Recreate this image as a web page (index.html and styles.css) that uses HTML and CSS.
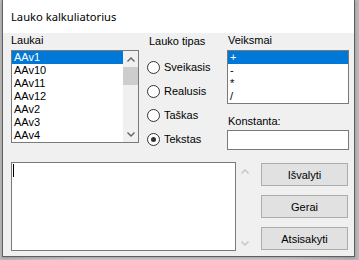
FILE: index.html
```html
<!DOCTYPE html>
<html lang="lt">
<head>
    <meta charset="UTF-8">
    <title>Lauko kalkuliatorius</title>
    <link rel="stylesheet" href="styles.css">
</head>
<body>
    <div class="window">
        <div class="titlebar">Lauko kalkuliatorius</div>
        <div class="client">
            <div class="top">
                <div class="col-fields">
                    <div class="label">Laukai</div>
                    <div class="listbox fields">
                        <div class="items">
                            <div class="item selected">AAv1</div>
                            <div class="item">AAv10</div>
                            <div class="item">AAv11</div>
                            <div class="item">AAv12</div>
                            <div class="item">AAv2</div>
                            <div class="item">AAv3</div>
                            <div class="item">AAv4</div>
                        </div>
                        <div class="vscroll">
                            <div class="arrow">
                                <svg width="8" height="5" viewBox="0 0 8 5"><polyline points="0.5,4.5 4,1 7.5,4.5" fill="none" stroke="#606060" stroke-width="1.3"/></svg>
                            </div>
                            <div class="track"><div class="thumb"></div></div>
                            <div class="arrow">
                                <svg width="8" height="5" viewBox="0 0 8 5"><polyline points="0.5,0.5 4,4 7.5,0.5" fill="none" stroke="#606060" stroke-width="1.3"/></svg>
                            </div>
                        </div>
                    </div>
                </div>
                <div class="col-type">
                    <div class="label group-label">Lauko tipas</div>
                    <div class="radio"><span class="dot"></span>Sveikasis</div>
                    <div class="radio"><span class="dot"></span>Realusis</div>
                    <div class="radio"><span class="dot"></span>Taškas</div>
                    <div class="radio"><span class="dot checked"></span>Tekstas</div>
                </div>
                <div class="col-ops">
                    <div class="label ops-label">Veiksmai</div>
                    <div class="listbox ops">
                        <div class="items">
                            <div class="item selected">+</div>
                            <div class="item">-</div>
                            <div class="item">*</div>
                            <div class="item">/</div>
                        </div>
                    </div>
                    <div class="label const-label">Konstanta:</div>
                    <div class="textbox"></div>
                </div>
            </div>
            <div class="bottom">
                <div class="memo"><span class="caret"></span></div>
                <div class="memo-scroll">
                    <svg width="8" height="5" viewBox="0 0 8 5"><polyline points="0.5,4.5 4,1 7.5,4.5" fill="none" stroke="#c4c4c4" stroke-width="1.4"/></svg>
                    <svg width="8" height="5" viewBox="0 0 8 5"><polyline points="0.5,0.5 4,4 7.5,0.5" fill="none" stroke="#c4c4c4" stroke-width="1.4"/></svg>
                </div>
                <div class="buttons">
                    <button>Išvalyti</button>
                    <button>Gerai</button>
                    <button>Atsisakyti</button>
                </div>
            </div>
        </div>
    </div>
</body>
</html>
```

FILE: styles.css
```css
html, body {
    margin: 0;
    height: 100%;
}
body {
    background: linear-gradient(to right, #bcbcbc, #d0d0d0 20%, #d0d0d0 80%, #b8b8b8);
    font-family: 'Liberation Sans', Arial, sans-serif;
    font-size: 11px;
    color: #000;
}
.window {
    width: 351px;
    height: 256px;
    margin-left: 2px;
    border: 1px solid #5f5f5f;
    border-top: none;
    background-color: #f0f0f0;
    box-shadow: 0 1px 3px rgba(0, 0, 0, 0.25);
    display: flex;
    flex-direction: column;
}
.titlebar {
    height: 33px;
    flex: none;
    box-sizing: border-box;
    padding: 9px 0 0 8px;
    background-color: #fff;
    font-family: 'Noto Sans', sans-serif;
    font-size: 11.2px;
    line-height: 16px;
}
.client {
    flex: 1;
    padding-left: 8px;
}
.top {
    display: flex;
    height: 129px;
}
.label {
    line-height: 13px;
    white-space: nowrap;
}
.col-fields {
    width: 128px;
}
.col-fields .label {
    height: 16px;
    padding-top: 1px;
}
.listbox {
    display: flex;
    background-color: #fff;
    border: 1px solid #7a7a7a;
    overflow: hidden;
}
.listbox.fields {
    height: 91px;
}
.items {
    flex: 1;
}
.item {
    height: 13px;
    line-height: 13px;
    padding-left: 2px;
    white-space: nowrap;
}
.item.selected {
    background-color: #0078d7;
    color: #fff;
}
.vscroll {
    width: 15px;
    display: flex;
    flex-direction: column;
    background-color: #f0f0f0;
}
.arrow {
    height: 16px;
    display: flex;
    align-items: center;
    justify-content: center;
}
.track {
    flex: 1;
}
.thumb {
    height: 18px;
    background-color: #cdcdcd;
}
.col-type {
    width: 80px;
    margin-left: 8px;
}
.group-label {
    height: 20px;
    padding: 2px 0 0 2px;
}
.radio {
    height: 24px;
    display: flex;
    align-items: center;
}
.dot {
    width: 11px;
    height: 11px;
    border: 1px solid #333;
    border-radius: 50%;
    background-color: #fff;
    margin-right: 4px;
    display: flex;
    align-items: center;
    justify-content: center;
}
.dot.checked::after {
    content: '';
    width: 5px;
    height: 5px;
    border-radius: 50%;
    background-color: #333;
}
.col-ops {
    width: 122px;
}
.ops-label {
    height: 16px;
    padding: 1px 0 0 1px;
}
.listbox.ops {
    height: 52px;
}
.const-label {
    margin-top: 11px;
    height: 15px;
    padding-left: 1px;
}
.textbox {
    height: 18px;
    background-color: #fff;
    border: 1px solid #7a7a7a;
}
.bottom {
    display: flex;
}
.memo {
    width: 223px;
    height: 87px;
    background-color: #fff;
    border: 1px solid #7a7a7a;
}
.caret {
    display: block;
    width: 1px;
    height: 13px;
    margin: 1px 0 0 1px;
    background-color: #000;
}
.memo-scroll {
    width: 17px;
    height: 89px;
    box-sizing: border-box;
    padding: 7px 0 5px;
    display: flex;
    flex-direction: column;
    justify-content: space-between;
    align-items: center;
}
.buttons {
    display: flex;
    flex-direction: column;
    gap: 9px;
    margin-left: 8px;
    padding-top: 1px;
}
button {
    width: 87px;
    height: 23px;
    padding: 0;
    font-family: 'Liberation Sans', Arial, sans-serif;
    font-size: 11px;
    color: #000;
    background-color: #e1e1e1;
    border: 1px solid #adadad;
}
```
